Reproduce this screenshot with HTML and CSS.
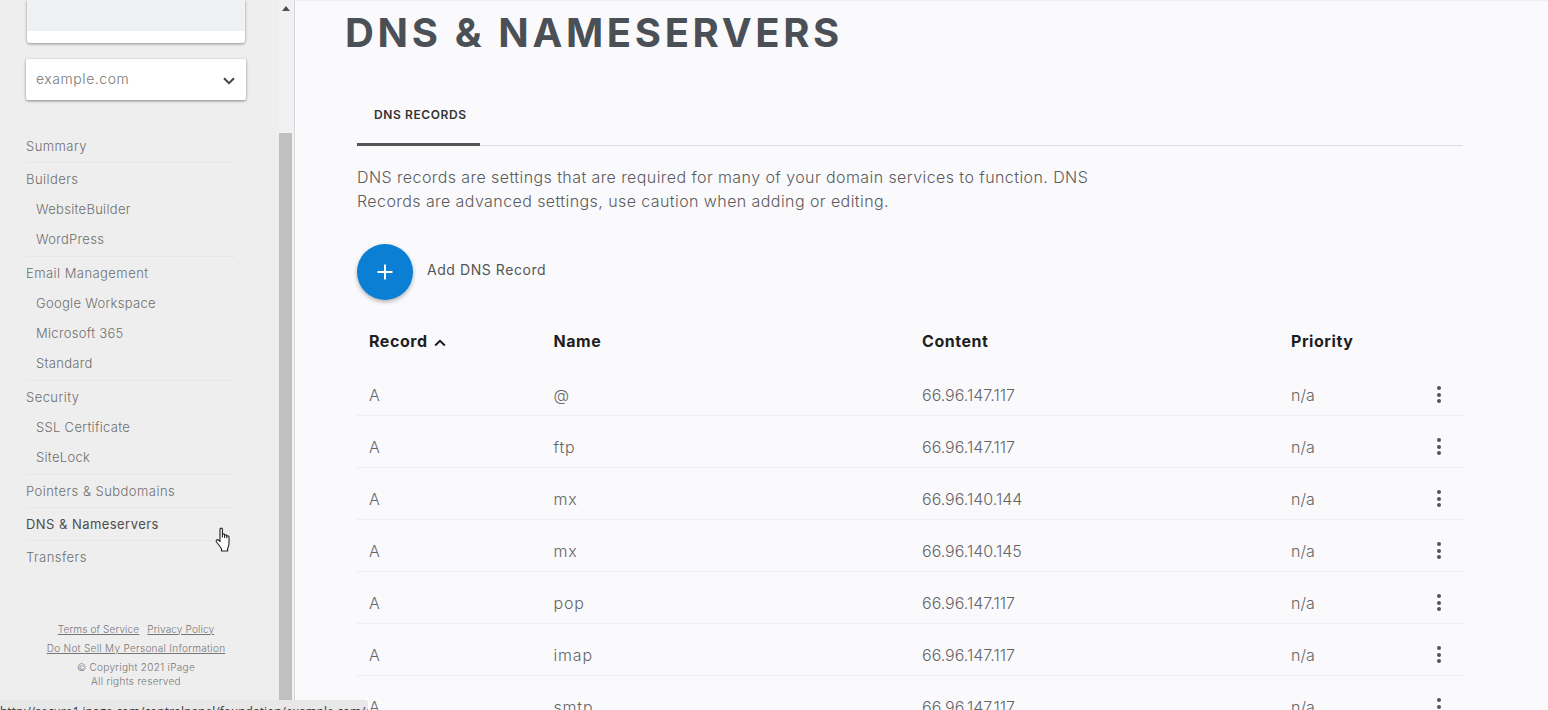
FILE: index.html
```html
<!DOCTYPE html>
<html lang="en">
<head>
<meta charset="utf-8">
<title>DNS &amp; Nameservers</title>
<link rel="stylesheet" href="styles.css">
</head>
<body>
<div class="app">
  <aside class="sidebar">
    <div class="top-card"><div class="top-card-fill"></div></div>
    <div class="domain-select">
      <span>example.com</span>
      <svg class="chev" width="12" height="8" viewBox="0 0 12 8"><path d="M1 1.2l5 5 5-5" fill="none" stroke="#444" stroke-width="2"/></svg>
    </div>
    <nav class="nav">
      <div class="group"><a class="top">Summary</a></div>
      <div class="group has-subs"><a class="top">Builders</a><a class="sub">WebsiteBuilder</a><a class="sub">WordPress</a></div>
      <div class="group has-subs"><a class="top">Email Management</a><a class="sub">Google Workspace</a><a class="sub">Microsoft 365</a><a class="sub">Standard</a></div>
      <div class="group has-subs"><a class="top">Security</a><a class="sub">SSL Certificate</a><a class="sub">SiteLock</a></div>
      <div class="group"><a class="top">Pointers &amp; Subdomains</a></div>
      <div class="group"><a class="top active">DNS &amp; Nameservers</a></div>
      <div class="group last"><a class="top">Transfers</a></div>
    </nav>
    <footer class="foot">
      <p class="foot-links tight"><a>Terms of Service</a><a>Privacy Policy</a></p>
      <p class="foot-links"><a>Do Not Sell My Personal Information</a></p>
      <p class="copy">© Copyright 2021 iPage<br>All rights reserved</p>
    </footer>
  </aside>
  <div class="scrollbar">
    <div class="arrow"></div>
    <div class="thumb"></div>
  </div>
  <main class="main">
    <h1 class="title">DNS &amp; NAMESERVERS</h1>
    <div class="content">
      <div class="tabs"><div class="tab">DNS RECORDS</div></div>
      <p class="intro">DNS records are settings that are required for many of your domain services to function. DNS Records are advanced settings, use caution when adding or editing.</p>
      <div class="add">
        <button class="fab"><svg width="18" height="18" viewBox="0 0 18 18"><path d="M9 1.5v15M1.5 9h15" stroke="#fff" stroke-width="2"/></svg></button>
        <span class="add-label">Add DNS Record</span>
      </div>
      <div class="table">
        <div class="row head">
          <div>Record <svg class="sort" width="12" height="8" viewBox="0 0 12 8"><path d="M1.2 6.5L6 1.8l4.8 4.7" fill="none" stroke="#1c1c1c" stroke-width="2"/></svg></div><div>Name</div><div>Content</div><div>Priority</div><div></div>
        </div>
        <div class="row"><div>A</div><div class="name">@</div><div>66.96.147.117</div><div>n/a</div><div class="more"><i></i><i></i><i></i></div></div>
        <div class="row"><div>A</div><div class="name">ftp</div><div>66.96.147.117</div><div>n/a</div><div class="more"><i></i><i></i><i></i></div></div>
        <div class="row"><div>A</div><div class="name">mx</div><div>66.96.140.144</div><div>n/a</div><div class="more"><i></i><i></i><i></i></div></div>
        <div class="row"><div>A</div><div class="name">mx</div><div>66.96.140.145</div><div>n/a</div><div class="more"><i></i><i></i><i></i></div></div>
        <div class="row"><div>A</div><div class="name">pop</div><div>66.96.147.117</div><div>n/a</div><div class="more"><i></i><i></i><i></i></div></div>
        <div class="row"><div>A</div><div class="name">imap</div><div>66.96.147.117</div><div>n/a</div><div class="more"><i></i><i></i><i></i></div></div>
        <div class="row"><div>A</div><div class="name">smtp</div><div>66.96.147.117</div><div>n/a</div><div class="more"><i></i><i></i><i></i></div></div>
      </div>
    </div>
  </main>
</div>
<svg class="cursor" width="18" height="26" viewBox="0 0 18 26"><path d="M5 2.2c0-1.500 2.400-1.500 2.400 0V10l0-2.200c0-1.300 2.200-1.300 2.200 0v2.700l0-1.800c0-1.300 2.200-1.300 2.200 0v2l0-1c0-1.300 2.200-1.300 2.200 0v6.300c0 2.500-.6 4-1.400 5.500v2.500H6.500v-2.200C5 19.500 3.500 17.500 1.500 15c-1-1.500.5-3 2-2L5 14.500z" fill="#fff" stroke="#222" stroke-width="1.100" stroke-linejoin="round"/></svg>
<div class="status">http://secure1.ipage.com/controlpanel/foundation/example.com/dns</div>
</body>
</html>
```
FILE: styles.css
```css
* { box-sizing: border-box; }
html, body { margin: 0; height: 100%; overflow: hidden; }
body { font-family: "Inter", "Open Sans", sans-serif; background: #fafafd; color: #555; }
.app { display: flex; height: 710px; }

.sidebar { width: 279px; flex: none; background: #eeeeee; display: flex; flex-direction: column; padding-left: 26px; }
.top-card { width: 218px; margin-left: 1px; height: 43px; background: #fff; border-radius: 0 0 3px 3px; box-shadow: 0 1px 3px rgba(0,0,0,.4); flex: none; }
.top-card-fill { height: 31px; background: #f0f1f2; }
.domain-select { margin-top: 16px; width: 220px; height: 41px; flex: none; background: #fff; border-radius: 2px; box-shadow: 0 1px 3px rgba(0,0,0,.45); display: flex; align-items: center; justify-content: space-between; padding: 0 11px 2px 10px; font-size: 14px; font-weight: 300; color: #777; letter-spacing: .55px; }
.chev { margin-top: 4px; }

.nav { margin-top: 30px; width: 209px; display: flex; flex-direction: column; }
.group { border-bottom: 1px solid #e4e6e7; display: flex; flex-direction: column; padding-bottom: 1px; }
.group.has-subs { padding-bottom: 2px; }
.group.last { border-bottom: 0; }
.group a { display: flex; align-items: center; font-size: 13px; font-weight: 300; color: #6e6e6e; white-space: nowrap; }
.top { height: 31px; padding-top: 1px; letter-spacing: .45px; }
.sub { height: 30px; padding-left: 10px; letter-spacing: .3px; }
.group .active { font-weight: 400; color: #4d4d4d; }

.foot { margin-top: 46px; width: 220px; text-align: center; font-size: 10px; font-weight: 300; color: #777; letter-spacing: .3px; }
.foot p { margin: 0; }
.foot-links { height: 19px; display: flex; justify-content: center; align-items: center; gap: 8px; }
.foot-links.tight { letter-spacing: .15px; }
.foot-links a { text-decoration: underline; white-space: nowrap; }
.copy { line-height: 14px; margin-top: 3px !important; }

.scrollbar { width: 15px; flex: none; background: #f1f1f3; border-right: 1px solid #f6f6f8; display: flex; flex-direction: column; }
.arrow { margin: 6px auto 0; width: 0; height: 0; border-left: 4px solid transparent; border-right: 4px solid transparent; border-bottom: 5px solid #505050; flex: none; }
.thumb { margin-top: 122px; width: 13px; flex: 1; background: #c0c0c0; }

.main { flex: 1; min-width: 0; border-left: 1px solid #cfcfcf; border-top: 1px solid #eeeeef; background: #fafafd; padding-left: 50px; overflow: hidden; box-shadow: inset 1px 0 0 #fff; }
.title { margin: 8px 0 0; font-size: 40px; line-height: 48px; font-weight: 700; letter-spacing: 3.65px; color: #4a5055; white-space: nowrap; }
.content { margin: 46px 0 0 12px; width: 1106px; }
.tabs { height: 43px; border-bottom: 1px solid #dcdcdc; }
.tab { width: 123px; height: 43px; border-bottom: 3px solid #555; font-size: 12px; font-weight: 600; color: #333; padding: 3px 0 0 17px; line-height: 18px; letter-spacing: .6px; }
.intro { margin: 19px 0 0; width: 745px; font-size: 16px; line-height: 24px; font-weight: 300; color: #5c5c5c; letter-spacing: .42px; }
.add { margin-top: 31px; display: flex; align-items: center; gap: 14px; font-size: 14px; color: #555; }
.add-label { padding-bottom: 6px; letter-spacing: .57px; }
.fab { width: 56px; height: 56px; border-radius: 50%; border: 0; padding: 0; background: #0a7fd4; box-shadow: 0 2px 4px rgba(0,0,0,.3); display: flex; align-items: center; justify-content: center; }
.table { margin-top: 17px; }
.row { display: grid; grid-template-columns: 184.5px 368.5px 369px 146px 1fr; height: 52px; padding-top: 10px; align-items: center; padding-left: 12px; border-bottom: 1px solid #eeeef2; font-size: 16px; font-weight: 300; color: #666; }
.row.head { height: 47px; padding-top: 0; border-bottom: 0; font-weight: 700; color: #1e1e1e; letter-spacing: .55px; }
.name { letter-spacing: .8px; }
.sort { margin-left: 2px; }
.more { display: flex; flex-direction: column; align-items: flex-start; gap: 2.7px; }
.more i { width: 4px; height: 4px; border-radius: 50%; background: #4b5563; }

.cursor { position: absolute; left: 215px; top: 527px; }
.status { position: absolute; left: 0; bottom: 0; width: 368px; height: 10px; background: #e8e8e8; border-top-right-radius: 3px; font-family: "Open Sans", sans-serif; font-size: 12px; line-height: 24px; color: #333; overflow: hidden; white-space: nowrap; }
```
